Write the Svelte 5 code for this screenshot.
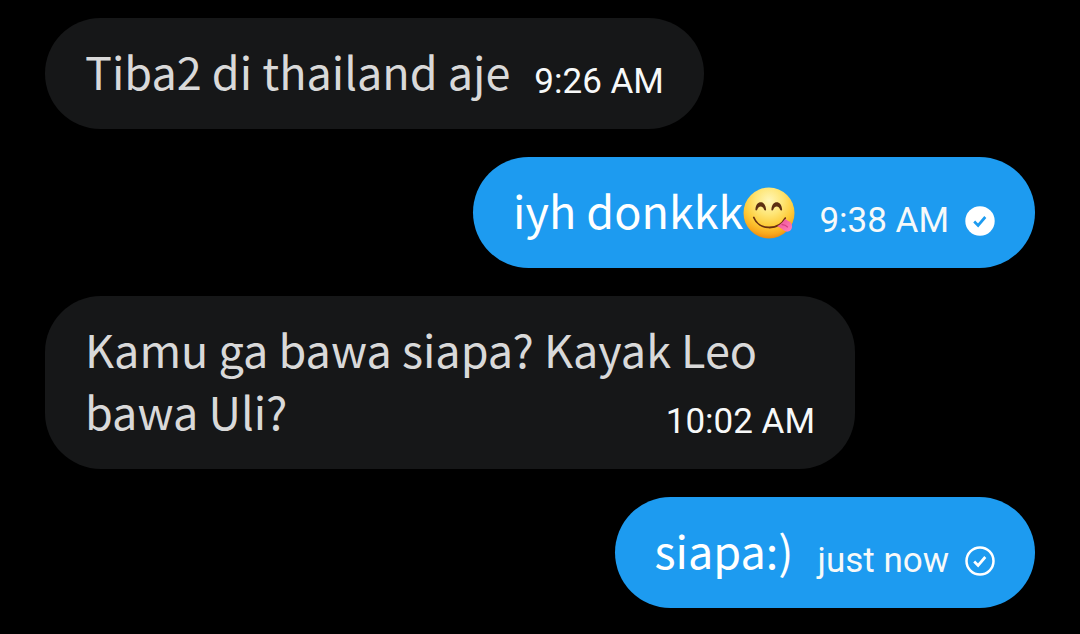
<script lang="ts">
	type Message = {
		id: number;
		text: string;
		emoji?: boolean;
		time: string;
		sender: 'me' | 'them';
		status?: 'sent' | 'read';
	};

	let messages = $state<Message[]>([
		{ id: 1, text: 'Tiba2 di thailand aje', time: '9:26 AM', sender: 'them' },
		{ id: 2, text: 'iyh donkkk', emoji: true, time: '9:38 AM', sender: 'me', status: 'read' },
		{ id: 3, text: 'Kamu ga bawa siapa? Kayak Leo bawa Uli?', time: '10:02 AM', sender: 'them' },
		{ id: 4, text: 'siapa:)', time: 'just now', sender: 'me', status: 'sent' }
	]);
</script>

{#snippet yumFace()}
	<svg class="emoji" viewBox="0 0 52 52" role="img" aria-label="😋">
		<defs>
			<radialGradient id="face" cx="0.5" cy="0.26" r="0.76">
				<stop offset="0" stop-color="#fff6b8" />
				<stop offset="0.35" stop-color="#fee677" />
				<stop offset="0.65" stop-color="#fecb38" />
				<stop offset="0.86" stop-color="#f9a81c" />
				<stop offset="1" stop-color="#e8820c" />
			</radialGradient>
			<linearGradient id="tongue" x1="0" y1="0" x2="1" y2="1">
				<stop offset="0" stop-color="#ee4f94" />
				<stop offset="1" stop-color="#ff80bb" />
			</linearGradient>
		</defs>
		<circle cx="26" cy="26" r="25.5" fill="url(#face)" />
		<path
			d="M12.4 22.4C12.8 17.600 15 15.200 17.700 15.200s5 2.400 5.400 7.200c.1 1.200-1.400 1.500-1.900.4-.9-2.200-2-3.300-3.500-3.300s-2.600 1.100-3.500 3.300c-.5 1.100-1.900.8-1.800-.4z"
			fill="#5c2f12"
		/>
		<path
			d="M28.400 22.400c.4-4.800 2.600-7.200 5.300-7.200s5 2.400 5.400 7.200c.1 1.200-1.400 1.500-1.900.4-.9-2.200-2-3.300-3.500-3.300s-2.600 1.100-3.500 3.300c-.5 1.100-1.900.8-1.800-.4z"
			fill="#5c2f12"
		/>
		<path
			d="M10.800 30.500c4.800 12.600 24.400 13.800 31.400.6"
			fill="none"
			stroke="#6b3010"
			stroke-width="1.800"
			stroke-linecap="round"
		/>
		<path
			d="M34.200 39.200c3.400-1.900 6-4.300 7.900-7.200 1.300 1.300 3.400 1.400 5.300 3.300 2.800 3 2 8.600-2.200 9.300-3.600.6-6-3.400-11-5.400z"
			fill="url(#tongue)"
		/>
		<path d="M39 37.600c2.400-.1 4 .8 5.500 2.400" fill="none" stroke="#d63c80" stroke-width="1.100" stroke-linecap="round" />
	</svg>
{/snippet}

<main class="conversation">
	{#each messages as message (message.id)}
		<div class="message {message.sender}">
			<p class="bubble">
				<span class="text">{message.text}{#if message.emoji}{@render yumFace()}{/if}</span>
				<span class="meta">
					<time>{message.time}</time>
					{#if message.status === 'read'}
						<svg class="status" viewBox="0 0 30 30" role="img" aria-label="Read">
							<circle cx="15" cy="15" r="14.700" fill="#fff" />
							<path d="M9.200 15.500l3.900 3.900 7.200-8.400" fill="none" stroke="#1d9bf0" stroke-width="2.700" />
						</svg>
					{:else if message.status === 'sent'}
						<svg class="status" viewBox="0 0 30 30" role="img" aria-label="Sent">
							<circle cx="15" cy="15" r="13.500" fill="none" stroke="#fff" stroke-width="2.500" />
							<path d="M9.200 15.500l3.900 3.900 7.200-8.400" fill="none" stroke="#fff" stroke-width="2.700" />
						</svg>
					{/if}
				</span>
			</p>
		</div>
	{/each}
</main>

<style>
	:global(body) {
		background: #000;
	}

	.conversation {
		display: flex;
		flex-direction: column;
		gap: 28px;
		padding: 18px 45px 24px;
		font-family: 'Noto Sans CJK SC', 'Noto Sans', sans-serif;
	}

	.message {
		display: flex;
	}

	.message.me {
		justify-content: flex-end;
	}

	.bubble {
		display: flow-root;
		box-sizing: border-box;
		max-width: 75vw;
		margin: 0;
		padding: 22px 40px 27px;
		border-radius: 56px;
		background: #161718;
		color: #d9d9d9;
		font-size: 45px;
		line-height: 62px;
	}

	.me .bubble {
		background: #1d9bf0;
		color: #fff;
	}

	/* floats onto the last line of the text when there is room */
	.meta {
		float: right;
		display: flex;
		align-items: center;
		gap: 16px;
		margin-left: 24px;
		padding-top: 22px;
		color: #f7f9f9;
		font-family: Roboto, 'Noto Sans', sans-serif;
		font-size: 35px;
		line-height: 40px;
	}

	.emoji {
		width: 52px;
		height: 52px;
		margin: -8px 0;
		vertical-align: -2px;
	}

	.status {
		width: 30px;
		height: 30px;
	}
</style>
